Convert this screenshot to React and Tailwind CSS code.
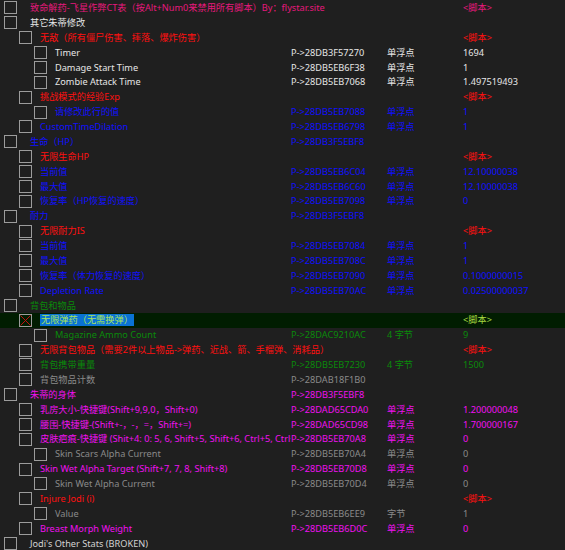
import React from 'react';

// màu theo kiểu Cheat Engine
const C = {
  pink: 'text-[#e6187c]',
  white: 'text-[#e6e6e6]',
  red: 'text-[#ff1010]',
  blue: 'text-[#1010ff]',
  green: 'text-[#0a8a0a]',
  gray: 'text-[#8a8a8a]',
  mag: 'text-[#f010f0]',
  light: 'text-[#d2d2d2]',
};

const rows = [
  { l: 0, c: 'pink', d: '致命解药-飞星作弊CT表（按Alt+Num0来禁用所有脚本）By：flystar.site', v: '<脚本>' },
  { l: 0, c: 'white', d: '其它朱蒂修改' },
  { l: 1, c: 'red', d: '无敌（所有僵尸伤害、摔落、爆炸伤害）', v: '<脚本>' },
  { l: 2, c: 'white', d: 'Timer', a: 'P->28DB3F57270', t: '单浮点', v: '1694' },
  { l: 2, c: 'white', d: 'Damage Start Time', a: 'P->28DB5EB6F38', t: '单浮点', v: '1' },
  { l: 2, c: 'white', d: 'Zombie Attack Time', a: 'P->28DB5EB7068', t: '单浮点', v: '1.497519493' },
  { l: 1, c: 'red', d: '挑战模式的经验Exp', v: '<脚本>' },
  { l: 2, c: 'blue', d: '请修改此行的值', a: 'P->28DB5EB7088', t: '单浮点', v: '1' },
  { l: 1, c: 'blue', d: 'CustomTimeDilation', a: 'P->28DB5EB6798', t: '单浮点', v: '1' },
  { l: 0, c: 'blue', d: '生命（HP）', a: 'P->28DB3F5EBF8' },
  { l: 1, c: 'red', d: '无限生命HP', v: '<脚本>' },
  { l: 1, c: 'blue', d: '当前值', a: 'P->28DB5EB6C04', t: '单浮点', v: '12.10000038' },
  { l: 1, c: 'blue', d: '最大值', a: 'P->28DB5EB6C60', t: '单浮点', v: '12.10000038' },
  { l: 1, c: 'blue', d: '恢复率（HP恢复的速度）', a: 'P->28DB5EB7098', t: '单浮点', v: '0' },
  { l: 0, c: 'blue', d: '耐力', a: 'P->28DB3F5EBF8' },
  { l: 1, c: 'red', d: '无限耐力IS', v: '<脚本>' },
  { l: 1, c: 'blue', d: '当前值', a: 'P->28DB5EB7084', t: '单浮点', v: '1' },
  { l: 1, c: 'blue', d: '最大值', a: 'P->28DB5EB708C', t: '单浮点', v: '1' },
  { l: 1, c: 'blue', d: '恢复率（体力恢复的速度）', a: 'P->28DB5EB7090', t: '单浮点', v: '0.1000000015' },
  { l: 1, c: 'blue', d: 'Depletion Rate', a: 'P->28DB5EB70AC', t: '单浮点', v: '0.02500000037' },
  { l: 0, c: 'green', d: '背包和物品' },
  { l: 1, c: 'green', d: '无限弹药（无需换弹）', v: '<脚本>', sel: true, x: true },
  { l: 2, c: 'green', d: 'Magazine Ammo Count', a: 'P->28DAC9210AC', t: '4 字节', v: '9' },
  { l: 1, c: 'red', d: '无限背包物品（需要2件以上物品->弹药、近战、箭、手榴弹、消耗品）', v: '<脚本>' },
  { l: 1, c: 'green', d: '背包携带重量', a: 'P->28DB5EB7230', t: '4 字节', v: '1500' },
  { l: 1, c: 'gray', d: '背包物品计数', a: 'P->28DAB18F1B0' },
  { l: 0, c: 'mag', d: '朱蒂的身体', a: 'P->28DB3F5EBF8' },
  { l: 1, c: 'mag', d: '乳房大小-快捷键(Shift+9,9,0，Shift+0)', a: 'P->28DAD65CDA0', t: '单浮点', v: '1.200000048' },
  { l: 1, c: 'mag', d: '腰围-快捷键-(Shift+-，-，=，Shift+=)', a: 'P->28DAD65CD98', t: '单浮点', v: '1.700000167' },
  { l: 1, c: 'mag', d: '皮肤疤痕-快捷键 (Shit+4: 0: 5, 6, Shift+5, Shift+6, Ctrl+5, Ctrl+6)', a: 'P->28DB5EB70A8', t: '单浮点', v: '0' },
  { l: 2, c: 'gray', d: 'Skin Scars Alpha Current', a: 'P->28DB5EB70A4', t: '单浮点', v: '0' },
  { l: 1, c: 'mag', d: 'Skin Wet Alpha Target (Shift+7, 7, 8, Shift+8)', a: 'P->28DB5EB70D8', t: '单浮点', v: '0' },
  { l: 2, c: 'gray', d: 'Skin Wet Alpha Current', a: 'P->28DB5EB70D4', t: '单浮点', v: '0' },
  { l: 1, c: 'red', d: 'Injure Jodi (i)', v: '<脚本>', vc: 'red' },
  { l: 2, c: 'gray', d: 'Value', a: 'P->28DB5EB6EE9', t: '字节', v: '1' },
  { l: 1, c: 'mag', d: 'Breast Morph Weight', a: 'P->28DB5EB6D0C', t: '单浮点', v: '0' },
  { l: 0, c: 'light', d: "Jodi's Other Stats (BROKEN)" },
];

const boxIndent = ['ml-[4px]', 'ml-[19px]', 'ml-[34px]'];
const textGap = ['ml-[13px]', 'ml-[8px]', 'ml-[8px]'];

const CheckBox = ({ checked }) => (
  <div className="w-[13px] h-[13px] border border-[#9c9c9c] shrink-0 relative">
    {checked && (
      <svg className="absolute inset-0" width="11" height="11" viewBox="0 0 11 11">
        <path d="M0.5 0.5L10.5 10.5M10.5 0.5L0.5 10.5" stroke="#c01010" strokeWidth="1" />
      </svg>
    )}
  </div>
);

const Row = ({ r }) => {
  const color = C[r.c];
  return (
    <div className={`h-[14.89px] flex items-center whitespace-nowrap ${r.sel ? 'bg-[#011d01]' : ''}`}>
      <div className={`w-[291px] shrink-0 flex items-center ${r.a ? 'overflow-hidden' : ''}`}>
        <div className={boxIndent[r.l]}>
          <CheckBox checked={r.x} />
        </div>
        {r.sel ? (
          <span className={`${textGap[r.l]} -ml-px px-px bg-[#0a72d4] text-[#a8e45a] leading-[12px]`}>{r.d}</span>
        ) : (
          <span className={`${textGap[r.l]} ${color}`}>{r.d}</span>
        )}
      </div>
      <div className={`w-[96px] shrink-0 ${color}`}>{r.a}</div>
      <div className={`w-[75px] shrink-0 ${color}`}>{r.t}</div>
      <div className={`ml-px ${r.sel ? 'text-[#a8dc40]' : r.v === '<脚本>' && r.c !== 'pink' ? C.red : color}`}>{r.v}</div>
    </div>
  );
};

export default function App() {
  return (
    <div
      className="w-[565px] h-[550px] overflow-hidden bg-[#1f1f1f] pt-[0.5px] text-[9.2px]"
      style={{ fontFamily: '"Noto Sans", "Noto Sans CJK SC", sans-serif' }}
    >
      {rows.map((r, i) => (
        <Row key={i} r={r} />
      ))}
    </div>
  );
}
